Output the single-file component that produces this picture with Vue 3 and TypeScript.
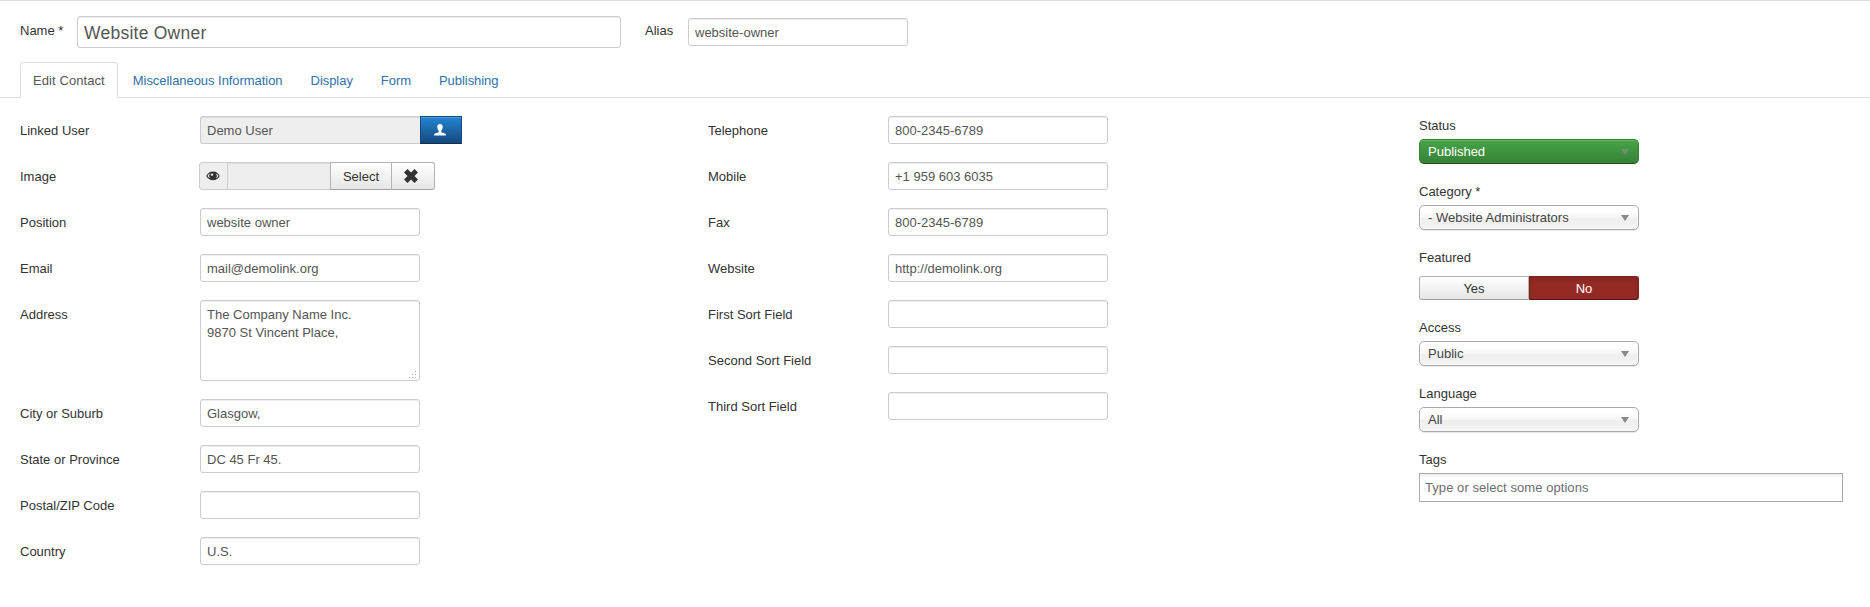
<script setup lang="ts">
import { ref } from 'vue'

interface Field {
  label: string
  value: string
  kind?: 'user' | 'media' | 'area'
}

const name = ref('Website Owner')
const alias = ref('website-owner')
const tags = ref('')
const activeTab = ref('Edit Contact')
const featured = ref(false)

const tabs = ['Edit Contact', 'Miscellaneous Information', 'Display', 'Form', 'Publishing']

const contactFields = ref<Field[]>([
  { label: 'Linked User', value: 'Demo User', kind: 'user' },
  { label: 'Image', value: '', kind: 'media' },
  { label: 'Position', value: 'website owner' },
  { label: 'Email', value: 'mail@demolink.org' },
  { label: 'Address', value: 'The Company Name Inc.\n9870 St Vincent Place,', kind: 'area' },
  { label: 'City or Suburb', value: 'Glasgow,' },
  { label: 'State or Province', value: 'DC 45 Fr 45.' },
  { label: 'Postal/ZIP Code', value: '' },
  { label: 'Country', value: 'U.S.' },
])

const detailFields = ref<Field[]>([
  { label: 'Telephone', value: '800-2345-6789' },
  { label: 'Mobile', value: '+1 959 603 6035' },
  { label: 'Fax', value: '800-2345-6789' },
  { label: 'Website', value: 'http://demolink.org' },
  { label: 'First Sort Field', value: '' },
  { label: 'Second Sort Field', value: '' },
  { label: 'Third Sort Field', value: '' },
])
</script>

<template>
  <main class="page">
    <header class="title-row">
      <label class="title-label name-label">Name *</label>
      <input v-model="name" class="input input-large" type="text" />
      <label class="title-label alias-label">Alias</label>
      <input v-model="alias" class="input" type="text" />
    </header>

    <nav class="tabs">
      <a
        v-for="tab in tabs"
        :key="tab"
        class="tab"
        :class="{ active: tab === activeTab }"
        @click="activeTab = tab"
      >{{ tab }}</a>
    </nav>

    <div class="columns">
      <section class="fields contact">
        <div v-for="field in contactFields" :key="field.label" class="row">
          <label class="row-label">{{ field.label }}</label>
          <div v-if="field.kind === 'user'" class="group">
            <input v-model="field.value" class="input joined" type="text" readonly />
            <button class="btn-user" type="button" aria-label="Select User">
              <svg width="12" height="12" viewBox="0 0 12 12">
                <path
                  fill="#fff"
                  d="M6 0C4.200 0 3.300 1.200 3.300 3c0 1.500.5 2.900 1.400 3.600v1.700C3.200 8.900 1 9.300.4 10.100c-.3.400-.4.900-.4 1.400h12c0-.5-.1-1-.4-1.400-.6-.8-2.800-1.200-4.300-1.800V6.600C8.200 5.900 8.700 4.500 8.700 3c0-1.800-.9-3-2.700-3z"
                />
              </svg>
            </button>
          </div>
          <div v-else-if="field.kind === 'media'" class="group media">
            <span class="addon">
              <svg width="14" height="10" viewBox="0 0 14 10">
                <path
                  fill="#333"
                  fill-rule="evenodd"
                  d="M7 .5C3.900.5 1.400 2.300.2 5 1.400 7.600 3.900 9.300 7 9.300S12.600 7.600 13.800 5C12.600 2.300 10.100.5 7 .5zM4 2.600a3.700 3.700 0 0 0 0 4.600C2.900 6.700 2 5.900 1.500 5 2 4.100 2.900 3.100 4 2.600zm6 0c1.100.5 2 1.500 2.500 2.400-.5.9-1.400 1.700-2.500 2.200a3.700 3.700 0 0 0 0-4.600zM6 2.400a1.200 1.200 0 1 1 0 2.400 1.200 1.200 0 0 1 0-2.400z"
                />
              </svg>
            </span>
            <input v-model="field.value" class="input media-input" type="text" readonly />
            <button class="btn select" type="button">Select</button>
            <button class="btn clear" type="button" aria-label="Clear">
              <svg width="14" height="14" viewBox="0 0 14 14">
                <path
                  fill="#333"
                  d="M3.500 0 7 3.500 10.500 0 14 3.500 10.500 7l3.500 3.500-3.500 3.500L7 10.500 3.500 14 0 10.500 3.500 7 0 3.500z"
                />
              </svg>
            </button>
          </div>
          <div v-else-if="field.kind === 'area'" class="area-wrap">
            <textarea v-model="field.value" class="input area"></textarea>
            <svg class="grip" width="8" height="8" viewBox="0 0 8 8">
              <path
                fill="#aaa"
                d="M6 0h1v1H6zM3 3h1v1H3zM6 3h1v1H6zM0 6h1v1H0zM3 6h1v1H3zM6 6h1v1H6z"
              />
            </svg>
          </div>
          <input v-else v-model="field.value" class="input" type="text" />
        </div>
      </section>

      <section class="fields details">
        <div v-for="field in detailFields" :key="field.label" class="row">
          <label class="row-label">{{ field.label }}</label>
          <input v-model="field.value" class="input" type="text" />
        </div>
      </section>

      <aside class="side">
        <div class="control">
          <label>Status</label>
          <div class="chosen published"><span>Published</span><i class="caret"></i></div>
        </div>
        <div class="control">
          <label>Category *</label>
          <div class="chosen"><span>- Website Administrators</span><i class="caret"></i></div>
        </div>
        <div class="control featured">
          <label>Featured</label>
          <div class="switch">
            <button type="button" :class="{ on: featured }" @click="featured = true">Yes</button>
            <button type="button" :class="{ off: !featured }" @click="featured = false">No</button>
          </div>
        </div>
        <div class="control">
          <label>Access</label>
          <div class="chosen"><span>Public</span><i class="caret"></i></div>
        </div>
        <div class="control">
          <label>Language</label>
          <div class="chosen"><span>All</span><i class="caret"></i></div>
        </div>
        <div class="control">
          <label>Tags</label>
          <input v-model="tags" class="tags" type="text" placeholder="Type or select some options" />
        </div>
      </aside>
    </div>
  </main>
</template>

<style>
body {
  margin: 0;
  background: #fff;
}
</style>

<style scoped>
.page,
.page * {
  box-sizing: border-box;
}

.page {
  height: 607px;
  overflow: hidden;
  border-top: 1px solid #ddd;
  color: #333;
  font: 13px/18px 'Liberation Sans', Arial, sans-serif;
}

input,
textarea,
button {
  margin: 0;
  font: inherit;
  letter-spacing: inherit;
}

.title-row {
  display: flex;
  align-items: center;
  height: 61px;
  padding: 1px 0 0 20px;
}

.title-label {
  flex: none;
  margin-bottom: 2px;
}

.name-label {
  width: 57px;
}

.alias-label {
  width: 43px;
  margin-left: 24px;
}

.input {
  display: block;
  flex: none;
  width: 220px;
  height: 28px;
  padding: 4px 6px;
  border: 1px solid #ccc;
  border-radius: 3px;
  outline: none;
  background: #fff;
  box-shadow: inset 0 1px 1px rgba(0, 0, 0, 0.075);
  color: #555;
}

.input-large {
  width: 544px;
  height: 32px;
  padding-top: 6px;
  font-size: 17.5px;
  letter-spacing: 0.25px;
}

.tabs {
  display: flex;
  height: 36px;
  padding-left: 20px;
  border-bottom: 1px solid #ddd;
}

.tab {
  height: 36px;
  margin-right: 2px;
  padding: 9px 12px 7px;
  border: 1px solid transparent;
  border-radius: 4px 4px 0 0;
  color: #3071a9;
  letter-spacing: -0.05px;
  cursor: pointer;
}

.tab.active {
  border-color: #ddd;
  border-bottom-color: #fff;
  background: #fff;
  color: #555;
  letter-spacing: 0.08px;
}

.columns {
  display: flex;
  padding: 18px 0 0 20px;
}

.fields {
  display: flex;
  flex: none;
  flex-direction: column;
  gap: 18px;
}

.contact {
  width: 688px;
}

.details {
  width: 711px;
}

.row {
  display: flex;
  align-items: flex-start;
}

.row-label {
  width: 180px;
  padding-top: 6px;
}

.group {
  display: flex;
}

.input[readonly] {
  background: #eee;
}

.joined {
  border-right: 0;
  border-radius: 3px 0 0 3px;
}

.btn-user {
  width: 42px;
  height: 28px;
  padding: 0 3px 1px 0;
  border: 1px solid #15497c;
  border-bottom-color: #0e2f50;
  background: linear-gradient(#2384d3, #15497c);
  box-shadow: inset 0 1px 0 rgba(255, 255, 255, 0.2);
}

.btn-user svg,
.btn svg {
  display: inline-block;
  vertical-align: middle;
}

.media {
  margin-left: -1px;
}

.addon {
  display: flex;
  width: 29px;
  height: 28px;
  padding: 8px 0 0 6px;
  border: 1px solid #ccc;
  border-radius: 3px 0 0 3px;
  background: #eee;
}

.media-input {
  width: 104px;
  margin-left: -1px;
  border-radius: 0;
}

.btn {
  height: 28px;
  margin-left: -1px;
  padding: 1px 0 0;
  border: 1px solid #b3b3b3;
  border-bottom-color: #a2a2a2;
  background: linear-gradient(#fff, #e6e6e6);
  box-shadow: inset 0 1px 0 rgba(255, 255, 255, 0.2);
  color: #333;
}

.select {
  width: 62px;
}

.clear {
  width: 44px;
  padding: 0 4px 2px 0;
  border-radius: 0 3px 3px 0;
}

.area-wrap {
  position: relative;
}

.area {
  height: 81px;
  padding-top: 5px;
  overflow: hidden;
  resize: none;
}

.grip {
  position: absolute;
  right: 3px;
  bottom: 2px;
}

.side {
  width: 424px;
  padding-top: 1px;
}

.control {
  margin-bottom: 19px;
}

.control label {
  display: block;
  margin-bottom: 4px;
}

.chosen {
  display: flex;
  align-items: center;
  justify-content: space-between;
  width: 220px;
  height: 25px;
  padding: 1px 9px 0 8px;
  border: 1px solid #aaa;
  border-radius: 5px;
  background: linear-gradient(#fff 20%, #f6f6f6 50%, #eee 52%, #f4f4f4 100%);
  box-shadow: inset 0 0 3px #fff, 0 1px 1px rgba(0, 0, 0, 0.1);
  color: #444;
}

.published {
  border-color: #378137;
  border-bottom-color: #204b20;
  background: linear-gradient(#46a546, #378137);
  box-shadow: inset 0 1px 0 rgba(255, 255, 255, 0.15);
  color: #fff;
}

.caret {
  margin-bottom: 1px;
  border: solid transparent;
  border-width: 6px 4px 0;
  border-top-color: #888;
}

.published .caret {
  border-top-color: #708f70;
}

.featured label {
  margin-bottom: 9px;
}

.switch {
  display: flex;
  width: 220px;
}

.switch button {
  width: 110px;
  height: 24px;
  padding: 1px 0 0;
  border: 1px solid #b3b3b3;
  border-bottom-color: #a2a2a2;
  border-radius: 3px 0 0 3px;
  background: linear-gradient(#fff, #e6e6e6);
  color: #333;
}

.switch button:last-child {
  border-radius: 0 3px 3px 0;
}

.switch .off {
  border-color: #802420;
  border-bottom-color: #57120f;
  background: #942a25;
  box-shadow: inset 0 2px 4px rgba(0, 0, 0, 0.15);
  color: #fff;
}

.tags {
  display: block;
  width: 424px;
  height: 29px;
  padding: 0 5px;
  border: 1px solid #aaa;
  border-radius: 0;
  outline: none;
  background: linear-gradient(#eee 1%, #fff 15%);
  color: #666;
  letter-spacing: 0.06px;
}

.tags::placeholder {
  color: #6d6d6d;
}
</style>
